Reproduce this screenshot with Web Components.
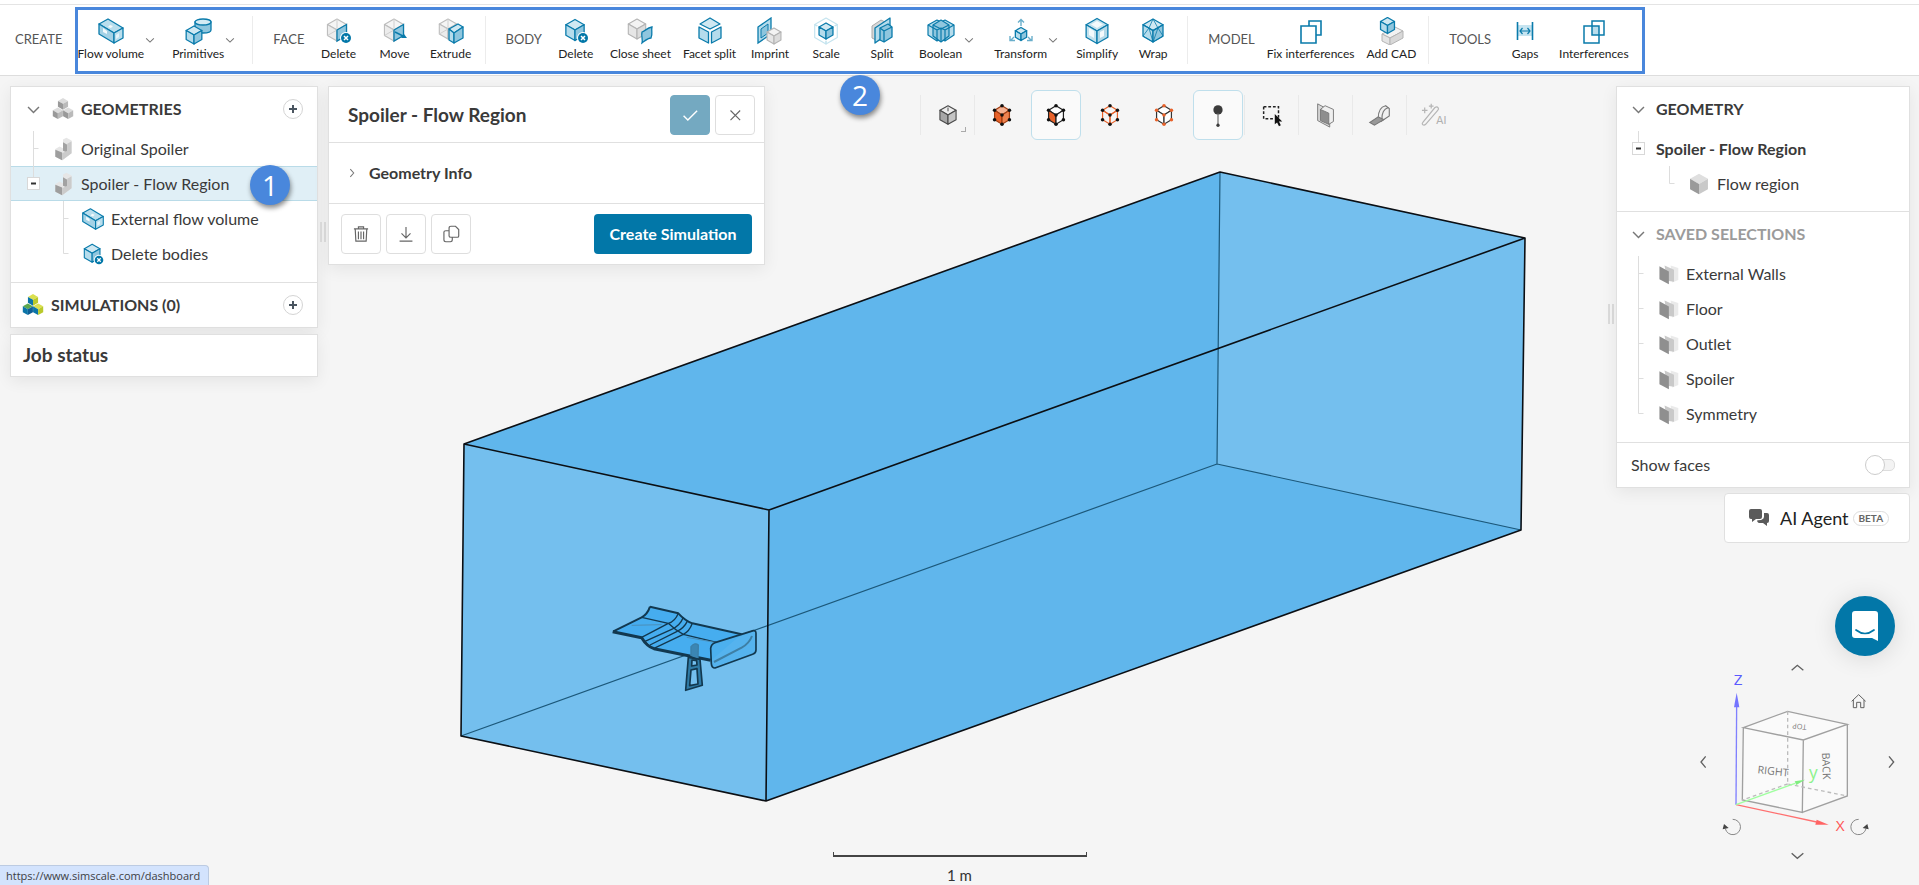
<!DOCTYPE html>
<html lang="en">
<head>
<meta charset="utf-8">
<title>Spoiler - Flow Region</title>
<style>
  html, body { margin: 0; height: 100%; }
  body {
    font: 16px/24px Lato, "Open Sans", sans-serif;
    color: #3a3a3a;
    background: #f5f5f5;
    overflow: hidden;
  }
</style>
</head>
<body>
<cad-app></cad-app>

<script>
/* ---------- icon drawing helpers ---------- */
const BLUE = '#0a7bab', FILL = '#b5dcec', FILL2 = '#8fc6de';

/* Isometric cube: centre, radius, three face fills (top, left, right), stroke. */
function cube(x, y, r, top, left, right, stroke, w = 1.3) {
  const k = r * 0.87, h = r / 2;
  return `<g stroke="${stroke}" stroke-width="${w}" stroke-linejoin="round">
    <path fill="${top}" d="M${x} ${y - r}L${x + k} ${y - h}L${x} ${y}L${x - k} ${y - h}z"/>
    <path fill="${left}" d="M${x - k} ${y - h}L${x} ${y}V${y + r}L${x - k} ${y + h}z"/>
    <path fill="${right}" d="M${x + k} ${y - h}L${x} ${y}V${y + r}L${x + k} ${y + h}z"/></g>`;
}
const blueCube = (x, y, r) => cube(x, y, r, '#cfe8f2', FILL, FILL2, BLUE);
const greyCube = (x, y, r) => cube(x, y, r, '#f3f3f3', '#e6e6e6', '#dcdcdc', '#b4b4b4', 1.1);
const wireCube = (x, y, r) => cube(x, y, r, '#f5f5f5', '#ececec', '#f1f1f1', '#bdbdbd', 1.1) +
  `<path d="M${x} ${y}V${y - r}M${x} ${y}L${x - r * 0.87} ${y + r / 2}M${x} ${y}L${x + r * 0.87} ${y + r / 2}" stroke="#cfcfcf" fill="none"/>`;
const cross = (x, y, r) => `<circle cx="${x}" cy="${y}" r="${r + 1}" fill="#fff"/><circle cx="${x}" cy="${y}" r="${r}" fill="#0277a8"/>
  <path d="M${x - 2} ${y - 2}l4 4m0-4l-4 4" stroke="#fff" stroke-width="1.5"/>`;
const solidCube = (x, y, r, a, b, c) => cube(x, y, r, a, b, c, 'none', 0);

function dotCube(top, left, right, line, dot) {
  const pts = [[14, 4], [22, 9], [22, 19], [14, 24], [6, 19], [6, 9], [14, 14]];
  return `<g stroke="${line}" stroke-width="1.3"><path fill="${top}" d="M14 4l8 5-8 5-8-5z"/>
    <path fill="${left}" d="M6 9l8 5v10l-8-5z"/><path fill="${right}" d="M22 9l-8 5v10l8-5z"/></g>` +
    pts.map(p => `<circle cx="${p[0]}" cy="${p[1]}" r="1.9" fill="${dot}"/>`).join('');
}

const ICONS = {
  flow: `<g stroke="${BLUE}" stroke-width="1.3" stroke-linejoin="round"><path fill="#b9deed" d="M2 7l9-5 15 9-9 5z"/>
    <path fill="#a4d2e6" d="M2 7l15 9v10L2 17z"/><path fill="#b9deed" d="M26 11l-9 5v10l9-5z"/></g>
    <path d="M6 11l4 3v3l-4-2zM13 8l3 1-2 2-3-1z" fill="#f4fafc"/><path d="M19 18l3-2v4l-3 2z" fill="#e4f3f9"/>`,
  primitives: `<g stroke="${BLUE}" stroke-width="1.3"><path fill="${FILL2}" d="M11 5v8c0 4 16 4 16 0V5z"/>
    <ellipse cx="19" cy="5" rx="8" ry="3" fill="#d4ebf4"/></g>` + blueCube(10, 18, 9),
  facedelete: wireCube(12, 13, 11) + `<path d="M21.500 7.500L12 13v11l9.500-5.500z" fill="${FILL2}" stroke="${BLUE}" stroke-width="1.300"/>` + cross(21, 21, 5),
  facemove: wireCube(13, 13, 11) + `<path d="M22.500 7.500L13 13v11l9.500-5.500z" fill="${FILL2}" stroke="${BLUE}" stroke-width="1.300"/>
    <path d="M14 15l8 4" stroke="${BLUE}" stroke-width="1.500"/><path d="M26 21l-6 0 3-4z" fill="${BLUE}"/>`,
  extrude: wireCube(11, 12, 10) + `<g stroke="${BLUE}" stroke-width="1.3" stroke-linejoin="round"><path fill="#cfe8f2" d="M12 12l9-5 5 3-9 6z"/>
    <path fill="${FILL}" d="M12 12l5 4v10l-5-3z"/><path fill="${FILL2}" d="M26 10l-9 6v10l9-5z"/></g>`,
  bodydelete: blueCube(13, 13, 10.5) + cross(21, 21, 5),
  sheet: greyCube(11, 12, 10) + `<path d="M16 15c3-1 5-4 10-5-1 4 1 7-1 11-3 0-5 2-9 5 1-4-1-7 0-11z" fill="${FILL2}" stroke="${BLUE}" stroke-width="1.3"/>`,
  facet: `<g fill="${FILL}" stroke="${BLUE}" stroke-width="1.3" stroke-linejoin="round"><path d="M14 1l10 6-10 5L4 7z" fill="#cfe8f2"/>
    <path d="M3 10l9.500 5v11L3 21z"/><path d="M25 10l-9.500 5v11l9.500-5z"/></g>`,
  imprint: `<path d="M2 10L15 1v16L2 26z" fill="${FILL}" stroke="${BLUE}" stroke-width="1.3"/><path d="M5 12l7-5v9l-7 5z" fill="#8cc5dd" stroke="${BLUE}"/>` + greyCube(18, 19, 8),
  scale: cube(14, 14, 13, 'none', 'none', 'none', '#c5e4ef', 1.2) + `<path d="M14 4l9 5v10l-9 5-9-5V9z" fill="#fff"/>` + blueCube(14, 14, 8),
  split: `<path d="M4 9l9-6 6 3v13l-9 5-6-3z" fill="#d8d8d8" stroke="#aaa"/><g stroke="${BLUE}" stroke-width="1.3" stroke-linejoin="round"><path d="M7 11l15-10v14L7 26z" fill="${FILL}"/>
    <path d="M12 11l8-4 4 3v10l-8 5-4-2z" fill="${FILL2}"/><path d="M12 11l4 3 8-4M16 14v11" fill="none"/></g>`,
  boolean: `<g stroke="${BLUE}" stroke-width="1.2" stroke-linejoin="round"><path fill="${FILL}" d="M1 8l9-5 4 2 4-2 9 5v10l-9 6-4-2-4 2-9-6z"/>
    <path fill="${FILL2}" d="M6 8l8-5 8 5v11l-8 6-8-6z"/><path fill="none" d="M1 8l9 5 4-2 4 2 9-5M10 13v11M18 13v11M14 11v14M6 8l8 4 8-4"/></g>`,
  transform: blueCube(14, 17, 6.500) + `<g fill="none" stroke="#69aecb" stroke-width="1.400"><path d="M14 9V3M11 5.500L14 2.500l3 3M7 20l-3 3M3 19v4.500h5M21 20l3 3M25 19v4.500h-5"/></g>`,
  simplify: cube(14, 14, 12.5, '#c3e2ee', '#c3e2ee', '#b3d9e8', BLUE) + `<path d="M14 4l6 3.500-6 3.500-6-3.500zM6 11l5 3v7l-5-3zM17 15l4-2v6l-4 2z" fill="#f4fafc"/>`,
  wrap: blueCube(14, 13.5, 11.5) + `<path d="M14 2l-4 9L4 19l10 6-4-14M14 2l5 9 5 8-10 6 5-14-5 3-4-3-6-3M24 8l-5 3" stroke="${BLUE}" fill="none" stroke-width=".8"/>`,
  fix: `<g fill="#fff" stroke="${BLUE}" stroke-width="1.6"><path d="M12 4h12v14H12z"/><path d="M4 9h15v17H4z"/></g>`,
  addcad: `<g stroke="#b4b4b4" fill="#e4e4e4" stroke-linejoin="round"><path d="M5 17l13-7 8 4-13 7z" fill="#f2f2f2"/><path d="M5 17l8 4v7l-8-4z"/><path d="M26 14l-13 7v7l13-7z" fill="#d8d8d8"/></g>` + blueCube(10.5, 8.5, 8),
  gaps: `<path fill="#c6e4f0" d="M7 8h15v11H7z"/><path d="M6.500 5v18M21.500 5v18" stroke="${BLUE}" stroke-width="1.6"/>
    <path d="M9 14h10M11.500 11L9 14l2.500 3M16.500 11l2.500 3-2.500 3" stroke="${BLUE}" fill="none" stroke-width="1.200"/>`,
  interf: `<path d="M12 9h7v9h-7z" fill="#b9ddec"/><g fill="none" stroke="${BLUE}" stroke-width="1.500"><path d="M12 4h12v14H12z"/><path d="M4 9h15v17H4z"/></g>`,

  part: `<path d="M14 3l4-2 6 3v15l-9 7-2 1-8-4v-9l5-3 4 2z" fill="#e6e6e6"/><path d="M14 6l5 3v9l-5-2z" fill="#a2a2a2"/>
    <path d="M5 15l8 3v9l-8-4z" fill="#9e9e9e"/><path d="M19 8l5-3v14l-11 8v-8l6-3z" fill="#cbcbcb"/>`,
  cubes3: [[14, 8], [8, 19], [20, 19]].map(p => solidCube(p[0], p[1], 6.8, '#dcdcdc', '#999', '#bababa')).join(''),
  sims: solidCube(14, 8, 6.8, '#dbe04f', '#0b75a8', '#b9c92b') + solidCube(8, 19, 6.8, '#5da84e', '#0b75a8', '#0e5f96') + solidCube(20, 19, 6.8, '#dbe04f', '#0b75a8', '#b9c92b'),
  solid: solidCube(14, 14, 12, '#dfdfdf', '#9a9a9a', '#c9c9c9'),
  faces: `<path d="M17 4l9 3v14l-7 3z" fill="#eaeaea"/><path d="M10 4l11 5v14l-8-1z" fill="#c9c9c9"/><path d="M4 5l11 6v15L4 20z" fill="#8f8f8f"/>`,
  chevdown: `<path d="M5 10l9 9 9-9" fill="none" stroke="#777" stroke-width="2.4"/>`,
  chevright: `<path d="M10 5l8 9-8 9" fill="none" stroke="#777" stroke-width="2.4"/>`,

  vcube: cube(14, 14, 10, '#ececec', '#a6a6a6', '#c4c4c4', '#4a4a4a', 1.2) + `<path d="M14 6v4" stroke="#444"/>`,
  vbody: dotCube('#f5b192', '#e8622a', '#ee8350', '#a03c10', '#111'),
  vface: dotCube('#fff', '#e8622a', '#fff', '#222', '#111'),
  vvert: dotCube('none', 'none', 'none', '#e8622a', '#111'),
  vedge: dotCube('#fff', '#fff', '#fff', '#333', '#e8622a'),
  vprobe: `<circle cx="14" cy="8.500" r="5" fill="#3b3b3b"/><path d="M14 12v12" stroke="#666" stroke-width="1.200"/><circle cx="14" cy="25" r="1.800" fill="#3b3b3b"/>`,
  vbox: `<path d="M5 5h16v12M5 5v13h12" fill="none" stroke="#222" stroke-width="1.600" stroke-dasharray="3 2"/><path d="M17 13v11l2.500-2 2 4 2-1-2-4h3.500z" fill="#111"/>`,
  vclip: `<g stroke="#777" stroke-width="1" stroke-linejoin="round"><path d="M5 2l13 7v18L5 20z" fill="#d9d9d9"/><path d="M8 8l5-4 9 4v13l-5 3z" fill="#efefef"/><path d="M8 8l9 4v12l-9-4z" fill="#8e8e8e"/></g>`,
  vtape: `<g fill="none" stroke="#777" stroke-width="1.2"><path d="M12 18c0-9 3-13 8-14l4 3v8l-9 6z" fill="#f0f0f0"/><path d="M16 19c0-8 2-11 7-13"/><path d="M12 16l-9 6 5 3 10-6z" fill="#999"/></g>`,
  vai: `<g fill="none" stroke="#b5b5b5" stroke-width="1.3"><path d="M2 22L15 6c3-2 5 1 3 3L5 24c-2 2-5 0-3-2zM4 6v6M1 9h6M11 2v5M8.500 4.500h5"/></g>`,

  check: `<path d="M5 15l6 6L24 8" fill="none" stroke="#fff" stroke-width="2"/>`,
  close: `<path d="M7 7l15 15M22 7L7 22" fill="none" stroke="#666" stroke-width="1.8"/>`,
  trash: `<path d="M3 6h22M10 6V3h8v3M5 6l1 19h16l1-19M10 10v12M14 10v12M18 10v12" fill="none" stroke="#666" stroke-width="1.8"/>`,
  download: `<path d="M14 3v16M7 13l7 7 7-7M4 25h20" fill="none" stroke="#666" stroke-width="1.8"/>`,
  copy: `<path d="M14 2h7l5 5v10q0 2-2 2H14q-3 0-3-2V5q0-3 3-3M11 9H6q-3 0-3 2v12q0 3 3 3h7q3 0 3-3v-4" fill="none" stroke="#666" stroke-width="1.8"/>`
};
const svg = (name, size) => `<svg width="${size}" height="${size}" viewBox="0 0 28 28" aria-hidden="true">${ICONS[name] || ''}</svg>`;

/* Base class: renders html() into an open shadow root. */
class Base extends HTMLElement {
  connectedCallback() {
    if (this.shadowRoot) return;
    const t = document.createElement('template');
    t.innerHTML = `<style>
      * { box-sizing: border-box; }
      svg { display: block; flex: none; }
      button { font: inherit; color: inherit; background: none; border: 0; padding: 0; margin: 0; }
      h2, h3, ul { margin: 0; padding: 0; font: inherit; }
      ${this.css()}</style>${this.html()}`;
    this.attachShadow({ mode: 'open' }).append(t.content.cloneNode(true));
  }
  css() { return ''; }
  html() { return '<slot></slot>'; }
}
const define = (n, c) => customElements.define(n, c);

/* ---------- top toolbar ---------- */
define('tool-item', class extends Base {
  css() { return `
    :host { display: flex; font-size: 12px; line-height: 16px; color: #222; }
    .tool { min-width: 56px; padding: 0 6px; display: flex; flex-direction: column; align-items: center; gap: 1px; white-space: nowrap; }
    :host([menu]) .tool { padding-right: 0; min-width: 0; }
    :host([wide]) .tool { padding-left: 9px; }
    .more { width: 22px; padding-top: 17px; display: flex; }
    :host([wide]) .more { width: 26px; padding-left: 1px; }`; }
  html() { return `<button class="tool">${svg(this.getAttribute('icon'), 28)}<slot></slot></button>` +
    (this.hasAttribute('menu') ? `<button class="more" aria-label="More options">${svg('chevdown', 12)}</button>` : ''); }
});
define('tool-group', class extends Base {
  css() { return `
    :host { display: flex; align-items: center; padding-right: 6px; border-right: 1px solid #ececec; height: 48px; }
    :host(:last-of-type) { border: 0; }
    h2 { font-size: 13px; line-height: 20px; color: #555; padding: 0 6px 2px 20px; }
    :host(:first-of-type) h2 { padding-left: 15px; padding-right: 9px; }`; }
  html() { return `<h2>${this.getAttribute('label')}</h2><slot></slot>`; }
});
define('top-toolbar', class extends Base {
  css() { return `
    :host { display: flex; align-items: center; position: relative; height: 76px; padding-top: 4px; background: #fff; border-bottom: 1px solid #ddd; box-shadow: inset 0 4px #fff, inset 0 5px #e4e4e4; }
    .mark { position: absolute; left: 75px; top: 7px; width: 1570px; height: 67px; border: 3px solid #4987dc; pointer-events: none; }`; }
  html() {
    const g = [
      ['CREATE', [['flow', 'Flow volume', 'menu'], ['primitives', 'Primitives', 'menu']]],
      ['FACE', [['facedelete', 'Delete'], ['facemove', 'Move'], ['extrude', 'Extrude']]],
      ['BODY', [['bodydelete', 'Delete'], ['sheet', 'Close sheet'], ['facet', 'Facet split'], ['imprint', 'Imprint'], ['scale', 'Scale'], ['split', 'Split'], ['boolean', 'Boolean', 'menu wide'], ['transform', 'Transform', 'menu'], ['simplify', 'Simplify'], ['wrap', 'Wrap']]],
      ['MODEL', [['fix', 'Fix interferences'], ['addcad', 'Add CAD']]],
      ['TOOLS', [['gaps', 'Gaps'], ['interf', 'Interferences']]]
    ];
    return g.map(([l, items]) => `<tool-group label="${l}">${items.map(i => `<tool-item icon="${i[0]}" ${i[2] || ''}>${i[1]}</tool-item>`).join('')}</tool-group>`).join('') + '<div class="mark"></div>';
  }
});

/* ---------- tree rows ---------- */
define('tree-row', class extends Base {
  css() { return `
    :host { display: flex; align-items: center; gap: 6px; height: 35px; padding-left: 12px; }
    :host([level="2"]) { padding-left: 42px; }
    :host([root]) { padding-left: 10px; }
    :host([head]) { height: 44px; font-weight: 700; }
    :host([strong]) { font-weight: 700; }
    :host([muted]) { color: #9b9b9b; }
    :host([selected]) { background: #e0eff6; box-shadow: inset 0 1px #b9dbe8, inset 0 -1px #b9dbe8; }
    .guide { width: 20px; height: 100%; margin-right: 2px; display: grid; place-items: center; flex: none; }
    .text { flex: 1; white-space: nowrap; }
    .add { width: 20px; height: 20px; margin-right: 14px; border: 1px solid #d4d4d4; border-radius: 50%; display: grid; place-items: center; background: #fff; }`; }
  html() {
    const g = this.getAttribute('guide'), icon = this.getAttribute('icon');
    const box = '<rect x="4.5" y="11.5" width="12" height="12" fill="#fff" stroke="#d8d8d8"/><path d="M8 17.500h5" stroke="#333" stroke-width="2"/>';
    const art = {
      mid: '<path d="M10.500 0v35M10.500 17.500h5" stroke="#ddd"/>',
      end: '<path d="M10.500 0v17.500h5" stroke="#ddd" fill="none"/>',
      box: '<path d="M10.500 0v12" stroke="#ddd"/>' + box
    }[g];
    const cell = this.hasAttribute('root') ? '' :
      `<span class="guide">${art ? `<svg width="20" height="35" viewBox="0 0 20 35">${art}</svg>` : `<button aria-label="Collapse">${svg('chevdown', 17)}</button>`}</span>`;
    return cell + (icon ? svg(icon, 24) : '') + `<span class="text"><slot></slot></span>` +
      (this.hasAttribute('add') ? '<button class="add" aria-label="Add"><svg width="8" height="8" viewBox="0 0 8 8"><path d="M4 0v8M0 4h8" stroke="#4a5560" stroke-width="2"/></svg></button>' : '');
  }
});
const CARD = 'background: #fff; border: 1px solid #e0e0e0; box-shadow: 0 4px 16px rgba(0,0,0,.07);';

define('project-tree', class extends Base {
  css() { return `
    :host { display: flex; flex-direction: column; gap: 6px; width: 308px; flex: none; }
    .card { ${CARD} }
    .geo { padding-bottom: 11px; border-bottom: 1px solid #e0e0e0; }
    .job { padding: 8px 12px 9px; }
    h2 { font-weight: 700; font-size: 19px; line-height: 24px; }`; }
  html() { return `<section class="card"><div class="geo">
      <tree-row head icon="cubes3" add>GEOMETRIES</tree-row>
      <tree-row guide="mid" icon="part">Original Spoiler</tree-row>
      <tree-row guide="box" icon="part" selected>Spoiler - Flow Region</tree-row>
      <tree-row level="2" guide="mid" icon="flow">External flow volume</tree-row>
      <tree-row level="2" guide="end" icon="bodydelete">Delete bodies</tree-row></div>
      <tree-row root head icon="sims" add>SIMULATIONS (0)</tree-row></section>
    <section class="card job"><h2>Job status</h2></section>`; }
});

define('info-panel', class extends Base {
  css() { return `
    :host { display: block; width: 437px; flex: none; align-self: flex-start; ${CARD} }
    header, .row, footer { display: flex; align-items: center; }
    header { height: 56px; padding: 0 9px 0 19px; gap: 5px; border-bottom: 1px solid #e0e0e0; }
    h2 { flex: 1; font-weight: 700; font-size: 19px; line-height: 24px; }
    .row { width: 100%; height: 61px; padding-left: 17px; gap: 11px; font-weight: 700; border-bottom: 1px solid #e0e0e0; }
    footer { height: 60px; padding: 0 12px; gap: 5px; }
    .sq { width: 40px; height: 40px; border: 1px solid #dedede; border-radius: 4px; display: grid; place-items: center; }
    .ok { background: #74a9c1; border-color: #74a9c1; }
    .go { height: 40px; width: 158px; margin-left: auto; border-radius: 4px; background: #0277a8; color: #fff; font-weight: 700; }`; }
  html() { return `<header><h2>Spoiler - Flow Region</h2><button class="sq ok" aria-label="Apply">${svg('check', 20)}</button><button class="sq" aria-label="Close">${svg('close', 18)}</button></header>
    <button class="row">${svg('chevright', 12)}Geometry Info</button>
    <footer><button class="sq" aria-label="Delete">${svg('trash', 18)}</button><button class="sq" aria-label="Download">${svg('download', 18)}</button><button class="sq" aria-label="Duplicate">${svg('copy', 18)}</button><button class="go">Create Simulation</button></footer>`; }
});
define('drag-handle', class extends Base {
  css() { return `:host { width: 6px; height: 20px; margin: 0 2px; border: solid #dcdcdc; border-width: 0 2px; flex: none; }`; }
  html() { return ''; }
});

/* ---------- viewport controls ---------- */
define('view-toolbar', class extends Base {
  css() { return `
    :host { display: flex; align-items: center; gap: 4px; height: 50px; }
    i { width: 1px; height: 40px; background: #e9e9e9; margin: 0 -2px 0 -3px; }
    button { width: 50px; height: 50px; border: 1px solid transparent; border-radius: 6px; display: grid; place-items: center; position: relative; }
    .on { background: #fafafa; border-color: #bfdfec; }
    .corner { position: absolute; right: 6px; bottom: 7px; width: 5px; height: 5px; border: solid #aaa; border-width: 0 1px 1px 0; }
    .ai { position: absolute; right: 11px; bottom: 13px; font: 11px/12px Inter, sans-serif; color: #b0b0b0; }`; }
  html() {
    const b = (n, label, c = '', x = '') => `<button class="${c}" aria-label="${label}">${svg(n, 26)}${x}</button>`;
    return '<i></i>' + b('vcube', 'Render mode', '', '<span class="corner"></span>') + '<i></i>' + b('vbody', 'Select bodies') + b('vface', 'Select faces', 'on') +
      b('vvert', 'Select vertices') + b('vedge', 'Select edges') + b('vprobe', 'Pick', 'on') + '<i></i>' + b('vbox', 'Box select') + '<i></i>' +
      b('vclip', 'Clipping plane') + '<i></i>' + b('vtape', 'Measure') + '<i></i>' + b('vai', 'AI tools', '', '<span class="ai">AI</span>');
  }
});

define('selection-panel', class extends Base {
  css() { return `
    :host { display: flex; flex-direction: column; align-items: flex-end; gap: 5px; width: 294px; flex: none; }
    .card { width: 100%; ${CARD} }
    .part { padding-bottom: 10px; border-bottom: 1px solid #e0e0e0; }
    .part + .part { padding-bottom: 11px; }
    .card tree-row:not([level]) { padding-left: 11px; }
    label { display: flex; align-items: center; justify-content: space-between; height: 44px; padding: 0 14px; }
    input { appearance: none; margin: 0; width: 30px; height: 20px; position: relative; display: flex; align-items: center; }
    input::before { content: ""; margin-left: auto; width: 22px; height: 10px; border: 1px solid #ddd; border-radius: 5px; background: #f3f3f3; }
    input::after { content: ""; position: absolute; left: 0; top: 0; width: 20px; height: 20px; box-sizing: border-box; border: 1px solid #ccc; border-radius: 50%; background: #fff; }
    .agent { display: flex; align-items: center; width: 186px; height: 50px; padding-left: 24px; background: #fff; border: 1px solid #e0e0e0; border-radius: 4px; font-size: 18px; color: #222; }
    .agent span { padding: 0 4px 0 9px; }
    .agent em { font: 700 10px/13px Lato, sans-serif; color: #666; border: 1px solid #ddd; border-radius: 8px; padding: 0 5px; }
    .chat { width: 60px; height: 60px; margin: 48px 15px 0 0; border-radius: 50%; background: #0277a8; display: grid; place-items: center; box-shadow: 0 2px 24px rgba(0,0,0,.12); }`; }
  html() {
    const sel = ['External Walls', 'Floor', 'Outlet', 'Spoiler', 'Symmetry'];
    return `<section class="card"><div class="part"><tree-row head>GEOMETRY</tree-row>
      <tree-row guide="box" strong>Spoiler - Flow Region</tree-row>
      <tree-row level="2" guide="end" icon="solid">Flow region</tree-row></div>
      <div class="part"><tree-row head muted>SAVED SELECTIONS</tree-row>
      ${sel.map((s, i) => `<tree-row guide="${i < 4 ? 'mid' : 'end'}" icon="faces">${s}</tree-row>`).join('')}</div>
      <label>Show faces<input type="checkbox" role="switch"></label></section>
    <button class="agent"><svg width="22" height="18" viewBox="0 0 22 18"><path d="M2 0h9q2 0 2 2v6q0 2-2 2H7l-4 3v-3H2q-2 0-2-2V2q0-2 2-2z" fill="#5a5a5a"/><path d="M15 4h3q2 0 2 2v6q0 2-2 2v3l-4-3h-4q-1 0-2-2 0-1 4-1 3-1 3-3z" fill="#5a5a5a"/></svg><span>AI Agent</span><em>BETA</em></button>
    <button class="chat" aria-label="Open chat"><svg width="26" height="30" viewBox="0 0 26 30"><path d="M3 0h20q3 0 3 3v27l-6-3H3q-3 0-3-3V3q0-3 3-3z" fill="#fff"/><path d="M4 19q9 7 18 0" fill="none" stroke="#0277a8" stroke-width="1.700" stroke-linecap="round"/></svg></button>`;
  }
});

/* Orientation cube with its axes and rotation arrows. */
define('nav-cube', class extends Base {
  css() { return `:host { display: block; position: absolute; right: 0; bottom: 0; width: 239px; height: 235px; }
    text { font-family: "Open Sans", sans-serif; }`; }
  html() { return `<svg width="239" height="235" viewBox="0 0 717 705" fill="none">
    <path d="M190 233L323 184 502 223 370 270zM190 233L187 450 367 487 370 270M370 270L502 223V438L367 487" fill="#fafafa"/>
    <g stroke="#a0a0a0" stroke-width="4"><path d="M190 233L323 184 502 223 370 270zM190 233L187 450 367 487 370 270M502 223V438L367 487"/>
    <path d="M323 184V402L502 438M323 402L187 450" stroke="#bcbcbc" stroke-dasharray="11 9"/></g>
    <path d="M168 464L170 160" stroke="#8080ff" stroke-width="4"/><path d="M170 128l8 44h-16z" fill="#7474ff"/>
    <path d="M168 464L410 516" stroke="#ff7070" stroke-width="4"/><path d="M446 524l-40 0 4-15z" fill="#ff6464"/>
    <path d="M168 464L345 400" stroke="#a0ffa0" stroke-width="4"/><path d="M375 389l-26 16-5-11z" fill="#80ee80"/>
    <g font-size="46"><text x="161" y="105" fill="#5a5aff">Z</text><text x="467" y="542" fill="#ff5454">X</text><text x="387" y="386" fill="#8cf28c" font-size="52">y</text></g>
    <g fill="#777"><text transform="translate(232 370) rotate(6)" font-size="32">RIGHT</text>
    <text transform="translate(426 308) rotate(88)" font-size="32">BACK</text>
    <text transform="translate(380 224) rotate(186)" font-size="22">TOP</text></g>
    <g stroke="#606060" stroke-width="4"><path d="M335 61l17-15 18 15M335 610l17 15 18-15M77 319l-14 17 14 17M627 319l14 17-14 17"/>
    <path d="M515 154l21-20 21 20M520 150v23h10v-16h12v16h10v-23" stroke-width="3"/>
    <path d="M158 508a23 23 0 1 1-22 28M536 508a23 23 0 1 0 22 28" stroke="#888" stroke-width="3"/></g>
    <path d="M128 538l4-16 14 12zM566 538l-4-16-14 12z" fill="#444"/></svg>`; }
});

/* Flow region box and the spoiler inside it. */
define('model-view', class extends Base {
  css() { return `:host { display: block; position: absolute; inset: 0; } .scene { width: 100%; height: 100%; }`; }
  html() { return `<svg class="scene" viewBox="0 0 1919 885" fill="none" stroke-linejoin="round">
    <path fill="#60b6ec" d="M464 444L1220 172 1525 238 1521 530 766 801 461 736z"/>
    <path fill="#74bfee" d="M464 444L769 510 766 801 461 736zM1220 172L1525 238 1521 530 1217 464z"/>
    <path d="M1220 172L1217 464 461 736M1217 464L1521 530" stroke="#1c587a" stroke-width="1.2"/>
    <g transform="translate(590 580) scale(.3333)" stroke="#12384f" stroke-width="5">
      <path d="M180 80L265 100 307 130 455 163 365 240 192 205 155 172 70 154 155 112z" fill="#46adef" stroke="none"/>
      <path d="M180 80L265 100Q285 122 307 130L455 163M180 80Q172 104 155 112L70 154" stroke-width="6"/>
      <path d="M155 112L235 130Q255 150 280 163L380 187M265 100Q255 125 235 130L155 172M280 112Q270 138 245 148L165 184M293 122Q282 145 260 155L180 195M307 130Q298 155 280 163L192 205" stroke-width="4"/>
      <path d="M68 155L155 173Q170 198 192 206L362 241" stroke-width="9"/>
      <path d="M125 136L215 134M290 172L390 190" stroke="#4b8fb8" stroke-width="3"/>
      <path d="M375 188L490 152Q498 151 498 160V210Q498 220 488 223L375 264Q365 264 364 250L362 205Q364 192 375 188z" fill="#4db0ee" fill-opacity=".8"/>
      <path d="M372 246L455 203Q478 190 486 168" stroke="#3e7fa5" stroke-width="6"/>
      <path d="M303 228V200Q315 186 325 195L324 236" fill="#3b86b4" stroke="#3b7fa8" stroke-width="4"/>
      <path fill-rule="evenodd" d="M295 232L330 238 337 316 287 331zM306 240L320 242 321 255 305 258zM303 270L321 266 324 312 299 317z" fill="#2f7ba6" stroke-width="5"/>
    </g>
    <path d="M464 444L1220 172 1525 238 1521 530 766 801 461 736zM464 444L769 510 1525 238M769 510L766 801" stroke="#0b0f14" stroke-width="1.6"/>
  </svg>`; }
});

define('scale-bar', class extends Base {
  css() { return `
    :host { position: absolute; left: 0; right: 0; bottom: 0; display: flex; flex-direction: column; align-items: center; gap: 8px; font-size: 15px; line-height: 20px; color: #333; }
    div { width: 254px; height: 5px; border: solid #444; border-width: 0 1px 2px; }`; }
  html() { return '<div></div><span>1 m</span>'; }
});
define('status-link', class extends Base {
  css() { return `:host { position: absolute; left: 0; bottom: 0; }
    a { display: block; height: 20px; padding: 0 8px 0 6px; font: 11px/20px "Open Sans", sans-serif; color: #3d4043; text-decoration: none; background: #d3e3fd; border: solid #bccbe2; border-width: 1px 1px 0 0; border-top-right-radius: 4px; }`; }
  html() { return '<a href="https://www.simscale.com/dashboard">https://www.simscale.com/dashboard</a>'; }
});
define('step-badge', class extends Base {
  css() { return `:host { position: absolute; width: 40px; height: 40px; border-radius: 50%; background: #4987dc; color: #fff; font: 28px/40px "Open Sans", sans-serif; text-align: center; box-shadow: 1px 3px 5px rgba(0,0,0,.45); }`; }
});

define('cad-app', class extends Base {
  css() { return `
    :host { display: flex; flex-direction: column; position: relative; min-height: 100vh; background: #f5f5f5; }
    main { display: flex; align-items: flex-start; position: relative; padding: 10px 9px 0 10px; }
    .l { margin-top: 136px; }
    .r { margin-top: 218px; }
    .mid { flex: 1; display: flex; justify-content: center; padding: 4px 0 0 10px; }
    .one { left: 250px; top: 165px; }
    .two { left: 840px; top: 75px; }`; }
  html() { return `<model-view></model-view><top-toolbar></top-toolbar>
    <main><project-tree></project-tree><drag-handle class="l"></drag-handle><info-panel></info-panel>
    <div class="mid"><view-toolbar></view-toolbar></div><drag-handle class="r"></drag-handle><selection-panel></selection-panel></main>
    <nav-cube></nav-cube><scale-bar></scale-bar><status-link></status-link>
    <step-badge class="one">1</step-badge><step-badge class="two">2</step-badge>`; }
});
</script>
</body>
</html>
